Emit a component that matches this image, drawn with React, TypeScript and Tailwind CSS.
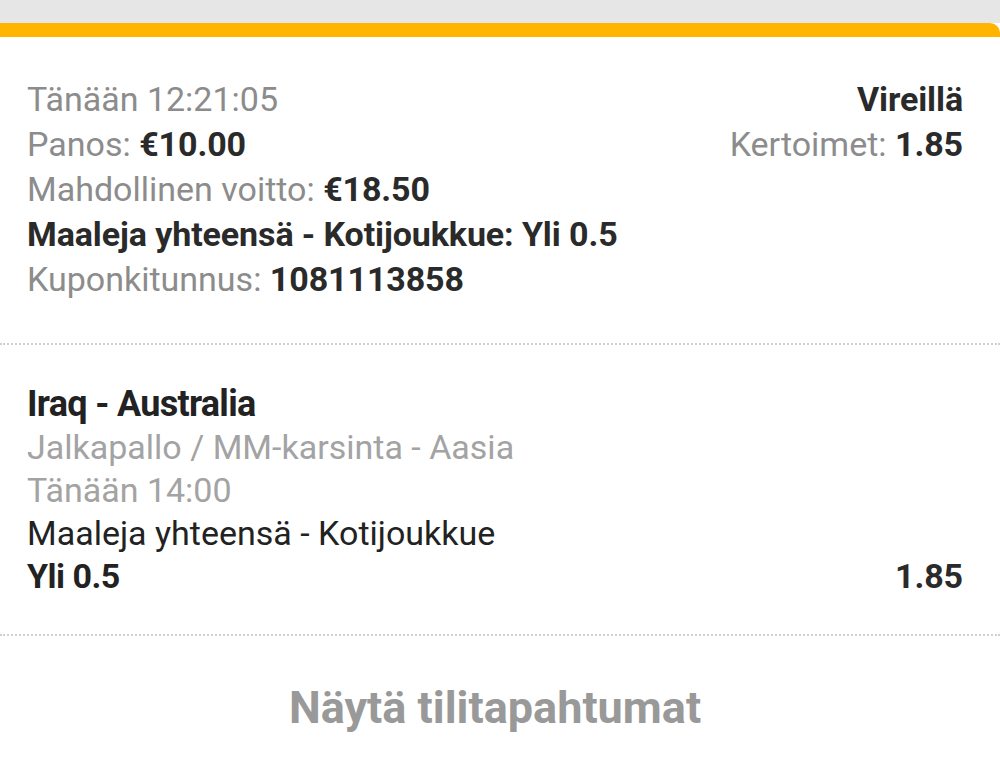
const gray = "text-[#8c8c8c]";
const dark = "font-bold text-[#2a2a2a] tracking-[-0.1px]";

const Row = ({ left, right }: { left: React.ReactNode; right?: React.ReactNode }) => (
  <div className="flex justify-between h-[45px] items-center">
    <div>{left}</div>
    {right && <div>{right}</div>}
  </div>
);

export default function App() {
  return (
    <div className="w-[1000px] h-[759px] bg-white overflow-hidden font-['Roboto',sans-serif] text-[34px] leading-[45px]">
      <div className="h-[23px] bg-[#e6e6e6]" />
      <div className="h-[14px] bg-[#ffb400] rounded-tr-[10px]" />

      <div className="pl-[27px] pr-[37px] pt-[40px] pb-[41px]">
        <Row
          left={<span className={gray}>Tänään 12:21:05</span>}
          right={<span className={dark}>Vireillä</span>}
        />
        <Row
          left={
            <>
              <span className={gray}>Panos: </span>
              <span className={dark}>€10.00</span>
            </>
          }
          right={
            <>
              <span className={gray}>Kertoimet: </span>
              <span className={dark}>1.85</span>
            </>
          }
        />
        <Row
          left={
            <>
              <span className={gray}>Mahdollinen voitto: </span>
              <span className={dark}>€18.50</span>
            </>
          }
        />
        <Row left={<span className={dark}>Maaleja yhteensä - Kotijoukkue: Yli 0.5</span>} />
        <Row
          left={
            <>
              <span className={gray}>Kuponkitunnus: </span>
              <span className={dark}>1081113858</span>
            </>
          }
        />
      </div>

      <div className="border-t-2 border-dotted border-[#cfcfcf]" />

      <div className="pl-[27px] pr-[37px] pt-[38px] pb-[36px] leading-[43px]">
        <div className="font-bold text-[#222] text-[36px] tracking-[-0.7px]">Iraq - Australia</div>
        <div className="text-[#a3a3a3]">Jalkapallo / MM-karsinta - Aasia</div>
        <div className="text-[#a3a3a3]">Tänään 14:00</div>
        <div className="text-[#222]">Maaleja yhteensä - Kotijoukkue</div>
        <div className="flex justify-between">
          <span className="font-bold text-[#222] tracking-[-0.5px]">Yli 0.5</span>
          <span className={dark}>1.85</span>
        </div>
      </div>

      <div className="border-t-2 border-dotted border-[#cfcfcf]" />

      <div className="flex justify-center pt-[49px]">
        <span className="text-[45px] font-bold text-[#999] pr-[10px]">Näytä tilitapahtumat</span>
      </div>
    </div>
  );
}
